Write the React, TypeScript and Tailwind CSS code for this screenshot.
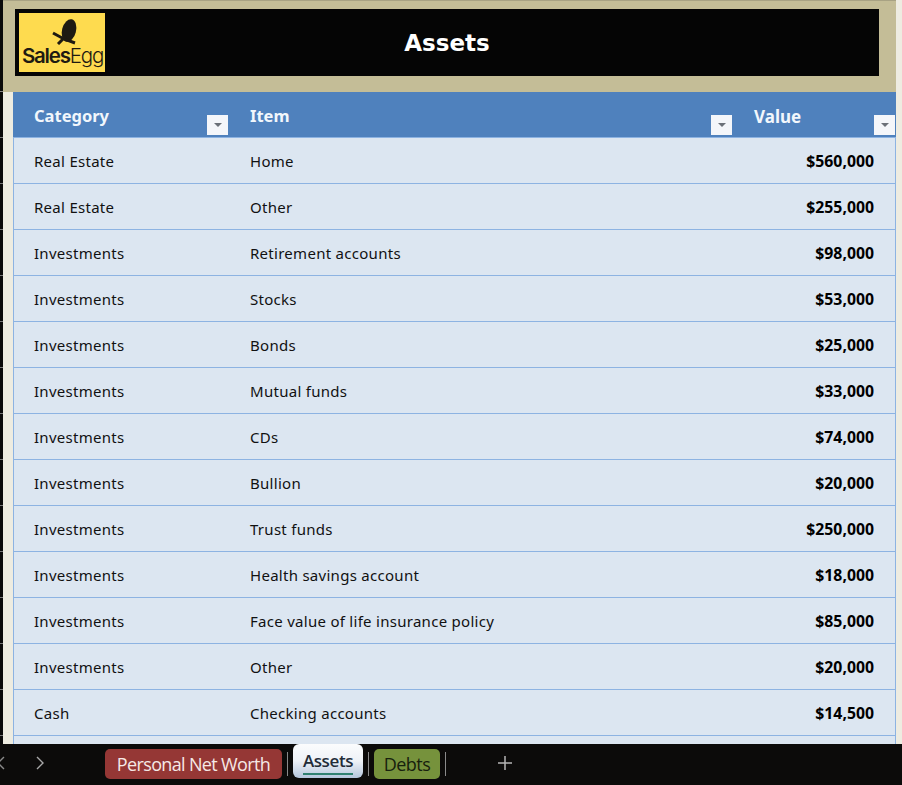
const rows: [string, string, string][] = [
  ["Real Estate", "Home", "$560,000"],
  ["Real Estate", "Other", "$255,000"],
  ["Investments", "Retirement accounts", "$98,000"],
  ["Investments", "Stocks", "$53,000"],
  ["Investments", "Bonds", "$25,000"],
  ["Investments", "Mutual funds", "$33,000"],
  ["Investments", "CDs", "$74,000"],
  ["Investments", "Bullion", "$20,000"],
  ["Investments", "Trust funds", "$250,000"],
  ["Investments", "Health savings account", "$18,000"],
  ["Investments", "Face value of life insurance policy", "$85,000"],
  ["Investments", "Other", "$20,000"],
  ["Cash", "Checking accounts", "$14,500"],
];

function FilterButton() {
  return (
    <div className="w-[21px] h-[20px] bg-[#f4f6fa] flex items-center justify-center shrink-0">
      <div className="w-0 h-0 border-l-[4px] border-r-[4px] border-t-[4px] border-l-transparent border-r-transparent border-t-[#6b7078]" />
    </div>
  );
}

function Logo() {
  return (
    <div className="w-[86px] h-[59px] bg-[#fedb4f] flex flex-col items-center shrink-0 overflow-hidden">
      <svg viewBox="0 0 86 32" className="w-[86px] h-[32px] shrink-0">
        <ellipse cx="50" cy="17.5" rx="7" ry="11.5" transform="rotate(14 50 17.5)" fill="#1e1a12" />
        <path d="M34 20 L45 26 L56 30 M39 31 L47 23" fill="none" stroke="#1e1a12" strokeWidth="3" />
      </svg>
      <div className="font-['Inter',sans-serif] text-[20.5px] leading-[20px] mt-[1px] pl-[1px] tracking-[-1.2px] text-[#1e1a12] whitespace-nowrap">
        <span className="font-semibold">Sales</span>
        <span className="font-light">Egg</span>
      </div>
    </div>
  );
}

export default function App() {
  return (
    <div className="w-[902px] h-[785px] overflow-hidden flex flex-col bg-[#eeece1] font-['Noto_Sans',sans-serif]">
      <div className="flex-1 min-h-0 flex">
        <div className="w-[3px] bg-[#0a0a0a] shrink-0 flex flex-col">
          <div className="h-[92px] shrink-0 border-b border-b-[#8a8a8a]" />
          {[...Array(14)].map((_, i) => (
            <div key={i} className="h-[46px] shrink-0 border-b border-b-[#777777]" />
          ))}
        </div>
        <div className="flex-1 min-w-0 flex flex-col pr-[6px]">
          <div className="h-[92px] shrink-0 bg-[#c4bd97] border-t border-t-[#a8a283] pl-[12px] pr-[17px] pt-[8px]">
            <div className="h-[67px] bg-[#050505] flex items-center pl-[4px]">
              <Logo />
              <div className="flex-1 text-center pr-[90px] pt-[2px] text-white font-bold text-[23px] font-['DejaVu_Sans',sans-serif]">
                Assets
              </div>
            </div>
          </div>
          <div className="flex-1 min-h-0 pl-[10px] flex flex-col">
            <div className="h-[46px] shrink-0 bg-[#4f81bd] border-b border-b-[#8db3e2] grid grid-cols-[216px_504px_1fr] text-[#f2f7fc] font-bold text-[16.5px]">
              <div className="flex justify-between pl-[21px] pr-[1px]">
                <span className="mt-[12px]">Category</span>
                <div className="mt-[23px]"><FilterButton /></div>
              </div>
              <div className="flex justify-between pl-[21px] pr-[1px]">
                <span className="mt-[12px]">Item</span>
                <div className="mt-[23px]"><FilterButton /></div>
              </div>
              <div className="flex justify-between pl-[21px] pr-[1px]">
                <span className="mt-[12px] text-[17px]">Value</span>
                <div className="mt-[23px]"><FilterButton /></div>
              </div>
            </div>
            <div className="flex-1 min-h-0 bg-[#dce6f1] border-x border-x-[#8db3e2]">
              {rows.map((r, i) => (
                <div
                  key={i}
                  className="h-[46px] border-b border-b-[#8db3e2] grid grid-cols-[215px_504px_1fr] items-center text-[15px] tracking-[0.28px] text-[#111]"
                >
                  <div className="pl-[20px] pt-[1px]">{r[0]}</div>
                  <div className="pl-[21px] pt-[1px]">{r[1]}</div>
                  <div className="text-right pr-[21px] pt-[2px] font-bold text-[15.8px] tracking-normal text-black">{r[2]}</div>
                </div>
              ))}
            </div>
          </div>
        </div>
      </div>
      <div className="h-[41px] shrink-0 bg-[#0c0b0a] flex items-start relative">
        <svg width="10" height="14" viewBox="0 0 10 14" className="absolute left-[-4px] top-[12px]" fill="none" stroke="#8a8a8a" strokeWidth="1.4">
          <path d="M8 1 L2 7 L8 13" />
        </svg>
        <svg width="10" height="14" viewBox="0 0 10 14" className="absolute left-[35px] top-[12px]" fill="none" stroke="#a8a8a8" strokeWidth="1.4">
          <path d="M2 1 L8 7 L2 13" />
        </svg>
        <div className="ml-[105px] mt-[5px] w-[177px] h-[30px] rounded-[5px] bg-[#953735] text-[#f5e9e6] text-[18px] tracking-[-0.65px] flex items-center justify-center font-['Open_Sans',sans-serif]">
          Personal Net Worth
        </div>
        <div className="ml-[5px] mt-[8px] w-px h-[24px] bg-[#8a8a8a]" />
        <div className="ml-[5px] mt-0 w-[70px] h-[34px] rounded-[6px] bg-gradient-to-b from-[#fbfcfd] via-[#eef2f7] to-[#b4c6dc] text-[#222c38] text-[17px] font-semibold tracking-[-0.4px] font-['Open_Sans',sans-serif] flex flex-col items-center">
          <span className="leading-[22px] mt-[6px]">Assets</span>
          <span className="w-[50px] h-[2px] bg-[#2f8070] mt-[1px]" />
        </div>
        <div className="ml-[5px] mt-[8px] w-px h-[24px] bg-[#8a8a8a]" />
        <div className="ml-[5px] mt-[5px] w-[66px] h-[30px] rounded-[5px] bg-[#76923c] text-[#17210d] text-[18px] tracking-[-0.5px] flex items-center justify-center font-['Open_Sans',sans-serif]">
          Debts
        </div>
        <div className="ml-[5px] mt-[8px] w-px h-[24px] bg-[#8a8a8a]" />
        <svg width="16" height="16" viewBox="0 0 16 16" className="absolute left-[497px] top-[11px]" stroke="#b5b5b5" strokeWidth="1.5">
          <path d="M8 1 V15 M1 8 H15" />
        </svg>
      </div>
    </div>
  );
}
